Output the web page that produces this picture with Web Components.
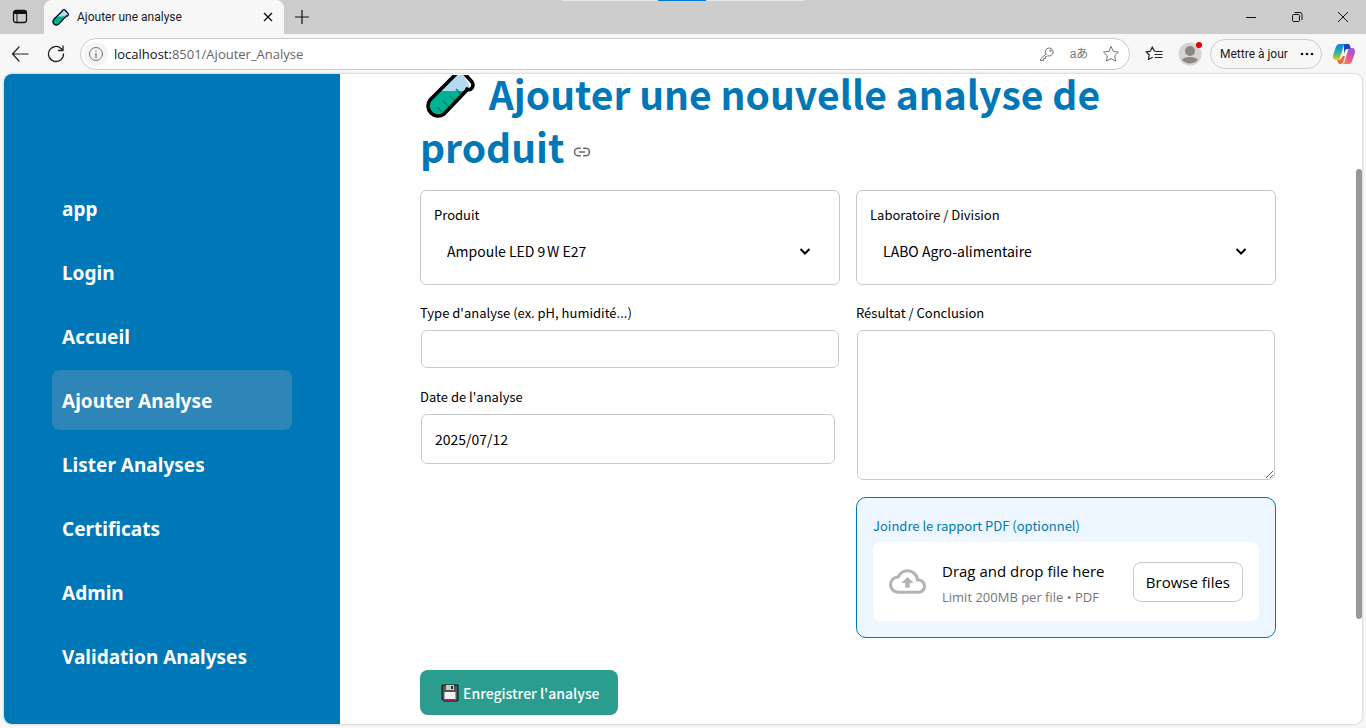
<!DOCTYPE html>
<html lang="fr">
<head>
<meta charset="utf-8">
<title>Ajouter une analyse</title>
<style>
  html, body { margin: 0; height: 100%; }
  body { --source: "Noto Sans CJK SC", sans-serif; --segoe: "Open Sans", "Noto Sans", sans-serif; --blue: #0077b6; --line: #c9cacc; font-family: var(--source); color: #000; background: #f7f7f7; }
</style>
</head>
<body>
<browser-window>
  <tab-strip slot="tabs" label="Ajouter une analyse"></tab-strip>
  <address-bar slot="toolbar"></address-bar>
  <side-nav slot="page">
    <nav-item href="#app">app</nav-item>
    <nav-item href="#login">Login</nav-item>
    <nav-item href="#accueil">Accueil</nav-item>
    <nav-item href="#ajouter" current>Ajouter Analyse</nav-item>
    <nav-item href="#lister">Lister Analyses</nav-item>
    <nav-item href="#certificats">Certificats</nav-item>
    <nav-item href="#admin">Admin</nav-item>
    <nav-item href="#validation">Validation Analyses</nav-item>
  </side-nav>
  <analysis-page slot="page"></analysis-page>
</browser-window>
<script>
const define = (name, html, setup) => {
  const t = document.createElement('template');
  t.innerHTML = '<style>:host,*{box-sizing:border-box}</style>' + html;
  customElements.define(name, class extends HTMLElement {
    constructor() {
      super();
      this.attachShadow({ mode: 'open' }).append(t.content.cloneNode(true));
    }
    connectedCallback() { if (setup) setup(this, this.shadowRoot); }
  });
};

define('browser-window', `
<style>
  :host { display: flex; flex-direction: column; min-height: 100vh; background: #f7f7f7; }
  .page { flex: 1; display: flex; margin: 0 4px 4px; border-radius: 8px; background: #fff; box-shadow: 0 0 2px 1px #d8d8d8; }
</style>
<slot name="tabs"></slot>
<slot name="toolbar"></slot>
<div class="page"><slot name="page"></slot></div>`);

define('test-tube', `
<style>
  :host { display: inline-block; overflow: hidden; }
  svg { display: block; width: 100%; height: 100%; }
  :host([cropped]) svg { height: 50px; margin-top: -6px; }
</style>
<svg viewBox="0 -6 50 50" aria-hidden="true">
  <path d="M31-1 5 25a10 10 0 0 0 14 14L46 13 36-4z" fill="#b3daf2"/>
  <path d="M14 16h28L19 39A10 10 0 0 1 5 25z" fill="#00b294"/>
  <path d="M31 14l5 5M24 20l5 5M18 26l5 5M12 32l5 5" stroke="#008575" stroke-width="1.500"/>
  <path d="M31-1 5 25a10 10 0 0 0 14 14L42 15M30-1c1-3 5-4 8-2l9 10c2 3 1 5-1 7-1 1-3 1-4 0" fill="none" stroke="#000" stroke-width="3.600" stroke-linecap="round" stroke-linejoin="round"/>
</svg>`);

define('tab-strip', `
<style>
  :host { display: flex; position: relative; height: 34px; flex: none; background: #cdcdcd; font: 12px/16px Roboto, sans-serif; color: #1b1b1b; }
  button { border: 0; padding: 0; background: none; display: grid; place-items: center; color: inherit; }
  svg { display: block; fill: none; stroke: #111; }
  .menu { width: 44px; padding-right: 4px; }
  .tab { width: 240px; display: flex; align-items: center; gap: 8px; padding: 0 8px; background: #f7f7f7; border-radius: 8px 8px 0 0; }
  test-tube { width: 17px; height: 17px; }
  .tab span { flex: 1; }
  .new { width: 36px; }
  .space { flex: 1; }
  .win { width: 46px; }
  .peek { position: absolute; top: 0; left: 0; right: 0; }
  .peek i { display: block; width: 242px; height: 1px; margin: 0 auto; background: linear-gradient(90deg, #e8e8e8 96px, #0078d4 96px 144px, #e8e8e8 144px); }
</style>
<button class="menu" aria-label="Onglets"><svg width="16" height="16"><rect x="1.5" y="1.5" width="13" height="12" rx="2.5" stroke-width="1.3"/><path d="M2 4h12M2 2.7h12" stroke-width="2"/><path d="M5 4v9"/></svg></button>
<div class="tab"><test-tube></test-tube><span></span>
<button aria-label="Fermer l'onglet"><svg width="16" height="16"><path d="M4 4l8 8M12 4l-8 8" stroke-width="1.4"/></svg></button></div>
<button class="new" aria-label="Nouvel onglet"><svg width="16" height="16"><path d="M8 1v14M1 8h14" stroke-width="1.2"/></svg></button>
<div class="space"></div>
<button class="win" aria-label="Réduire"><svg width="12" height="12"><path d="M1 6.5h10"/></svg></button>
<button class="win" aria-label="Restaurer"><svg width="12" height="12"><rect x="1.5" y="3.5" width="7" height="7" rx="1.2"/><path d="M3.5 1.5h5.5a2 2 0 0 1 2 2V9"/></svg></button>
<button class="win" aria-label="Fermer"><svg width="12" height="12"><path d="M1 1l10 10M11 1L1 11"/></svg></button>
<div class="peek"><i></i></div>`, (el, root) => {
  root.querySelector('.tab span').textContent = el.getAttribute('label');
});

define('address-bar', `
<style>
  :host { display: flex; align-items: center; height: 40px; flex: none; padding: 0 10px 0 8px; font: 13px/18px var(--segoe); color: #1b1b1b; }
  button { border: 0; padding: 0; background: none; display: grid; place-items: center; width: 24px; height: 24px; color: inherit; font: inherit; flex: none; }
  svg { display: block; fill: none; stroke: #222; stroke-linecap: round; stroke-linejoin: round; }
  .nav { display: flex; gap: 12px; width: 72px; }
  .url { flex: 1; display: flex; align-items: center; height: 32px; border: 1px solid #ccc; border-radius: 16px; background: #fff; padding: 0 6px 0 3px; gap: 8px; }
  .url svg { stroke: #757575; }
  .info { background: #f4f4f4; border-radius: 50%; }
  .address { flex: 1; margin-left: -2px; color: #666; }
  .address b { font-weight: 400; color: #111; }
  .tr { font: 12px/18px "Liberation Sans", "Noto Sans CJK JP", sans-serif; color: #777; }
  .fav { margin: 0 12px; }
  .avatar { position: relative; }
  .avatar svg { stroke: none; }
  .dot { position: absolute; top: 0; right: 0; width: 6px; height: 6px; border-radius: 50%; background: #e00000; }
  .update { display: flex; align-items: center; gap: 10px; width: 112px; justify-content: space-between; height: 30px; border: 1px solid #ccc; border-radius: 16px; padding: 0 6px 0 9px; margin: 0 10px 0 8px; font: 12px/18px Roboto, sans-serif; white-space: nowrap; }
  .update svg { stroke: none; fill: #111; }
  .copilot svg { stroke: none; }
</style>
<div class="nav">
<button aria-label="Retour"><svg width="18" height="18"><path d="M17 9H1.500M8 2L1.500 9L8 16" stroke-width="1.2"/></svg></button>
<button aria-label="Actualiser"><svg width="18" height="18"><path d="M16.500 9a7.500 7.500 0 1 1-2.500-5.600L16 5.500M16 1v4.500h-4.500" stroke-width="1.3"/></svg></button>
</div>
<div class="url">
<button class="info" aria-label="Informations sur le site"><svg width="16" height="16"><circle cx="8" cy="8" r="6.500"/><path d="M8 7.500v4M8 4.800v.3" stroke-width="1.300"/></svg></button>
<span class="address"><b>localhost:</b>8501/Ajouter_Analyse</span>
<button aria-label="Mot de passe"><svg width="16" height="16"><path d="M6.800 8.200 1.500 13v1.500h3v-2h2v-2h1.300l.8-.8a4 4 0 1 0-1.800-1.500z"/><circle cx="11.300" cy="4.800" r=".6"/></svg></button>
<button class="tr" aria-label="Traduire">aあ</button>
<button aria-label="Favori"><svg width="18" height="18"><path d="m9 1.500 2.300 4.900 5.200.7-3.800 3.700.9 5.300L9 13.600l-4.600 2.500.9-5.300L1.500 7.100l5.200-.7z"/></svg></button>
</div>
<button class="fav" aria-label="Favoris"><svg width="18" height="18"><path d="M10 5.800h-.8L7.300 2 5.200 6.300l-4.200.5 3.200 3-.8 4.700 3.900-2M11 6.500h6M10 9.500h7M10 12.500h7" stroke-width="1.200"/></svg></button>
<button class="avatar" aria-label="Profil"><svg width="24" height="24"><circle cx="12" cy="12" r="11.500" fill="#d6d3d0"/><circle cx="12" cy="9" r="5" fill="#8b8784"/><path d="M4 18c2-4 14-4 16 0a11 11 0 0 1-16 0" fill="#8b8784"/></svg><i class="dot"></i></button>
<button class="update">Mettre à jour <svg width="16" height="16"><circle cx="3" cy="8" r="1.300"/><circle cx="8" cy="8" r="1.300"/><circle cx="13" cy="8" r="1.300"/></svg></button>
<button class="copilot" aria-label="Copilot"><svg width="24" height="24" viewBox="0 0 24 24">
<defs><linearGradient id="a" x1="0" y1="0" x2="0" y2="1"><stop stop-color="#1686e8"/><stop offset=".4" stop-color="#18a5c0"/><stop offset=".7" stop-color="#6cc455"/><stop offset="1" stop-color="#f2c815"/></linearGradient><linearGradient id="b" x1=".8" y1="0" x2="0" y2="1"><stop stop-color="#9355e5"/><stop offset=".5" stop-color="#e5549c"/><stop offset="1" stop-color="#ff943d"/></linearGradient></defs>
<path d="M12 2h4c2 0 2 2 3 5h-3c-3 0-3 2-4 5z" fill="#1643b8"/>
<path d="M7.500 2H14c-2 0-2.500 2-3 4L8.500 14c-.7 3-2 4-4 4H4c-3 0-3.500-3-2.500-6l2-6c1-3 2-4 4-4z" fill="url(#a)"/>
<path d="M16.500 22H10c2 0 2.500-2 3-4l2.500-8c.7-3 2-4 4-4h.5c3 0 3.500 3 2.500 6l-2 6c-1 3-2 4-4 4z" fill="url(#b)"/>
<path d="M5 18c3 0 4.500-1 5.500-4h2.500l-1.500 5c-.6 2-1.500 3-3.500 3-2 0-2-2-3-4z" fill="#f06b30"/>
</svg></button>`);

define('side-nav', `
<style>
  :host { display: block; flex: none; width: 336px; background: var(--blue); padding: 104px 48px 0; border-radius: 8px 0 0 8px; }
  nav { display: flex; flex-direction: column; gap: 4px; }
</style>
<nav><slot></slot></nav>`);

define('nav-item', `
<style>
  :host { display: block; }
  a { display: flex; align-items: center; height: 60px; padding: 2px 10px 0; border-radius: 8px; color: #fff; text-decoration: none; font: 700 19px/28px "Noto Sans", sans-serif; }
  :host([current]) a { background: #2e86b8; }
</style>
<a><slot></slot></a>`, (el, root) => {
  root.querySelector('a').href = el.getAttribute('href');
});

define('select-card', `
<style>
  :host { display: block; border: 1px solid var(--line); border-radius: 6px; padding: 14px 13px; height: 95px; }
  label { display: block; font-size: 13px; line-height: 20px; }
  .box { position: relative; margin-top: 6px; }
  select { appearance: none; display: block; width: 100%; height: 40px; border: 0; background: none; padding: 0 40px 0 13px; font: 14px/20px var(--source); color: #000; }
  svg { position: absolute; right: 14px; top: 13px; fill: none; stroke: #000; stroke-width: 2; pointer-events: none; }
</style>
<label for="s"></label>
<div class="box"><select id="s"><option></option></select><svg width="14" height="14"><path d="M2.500 5 7 9.500 11.500 5"/></svg></div>`, (el, root) => {
  root.querySelector('label').textContent = el.getAttribute('label');
  root.querySelector('option').textContent = el.getAttribute('value');
});

define('text-field', `
<style>
  :host { display: block; }
  label { display: block; font-size: 13px; line-height: 20px; margin-bottom: 7px; }
  .control { padding: 0 1px; }
  input, textarea { display: block; width: 100%; border: 1px solid var(--line); border-radius: 6px; padding: 0 13px; background: #fff; color: #000; font: 14px/20px var(--source); }
  input { height: 38px; }
  :host([kind="date"]) .control { padding-right: 5px; }
  :host([kind="date"]) input { height: 50px; }
  textarea { height: 150px; }
</style>
<label for="f"></label><div class="control"></div>`, (el, root) => {
  root.querySelector('label').textContent = el.getAttribute('label');
  const f = document.createElement(el.getAttribute('kind') === 'area' ? 'textarea' : 'input');
  f.id = 'f';
  f.value = el.getAttribute('value') || '';
  root.querySelector('.control').replaceChildren(f);
});

define('file-drop', `
<style>
  :host { display: block; border: 1px solid var(--blue); border-radius: 10px; background: #eef7ff; padding: 18px 16px 16px; }
  .label { font-size: 13px; line-height: 20px; color: var(--blue); margin-bottom: 6px; }
  .drop { display: flex; align-items: center; gap: 16px; height: 79px; padding: 0 16px; border-radius: 8px; background: #fff; font-family: var(--segoe); }
  svg { flex: none; }
  .text { flex: 1; white-space: nowrap; padding-top: 3px; }
  .big { font-size: 15px; line-height: 26px; margin-bottom: 1px; }
  .small { font-size: 13px; line-height: 24px; color: #777; }
  button { height: 40px; padding: 0 12px; border: 1px solid var(--line); border-radius: 8px; background: #fff; color: #000; font: 15px/24px var(--segoe); white-space: nowrap; }
</style>
<div class="label" id="l">Joindre le rapport PDF (optionnel)</div>
<div class="drop" role="group" aria-labelledby="l">
<svg width="37" height="37" viewBox="0 0 24 24" fill="#b3b3b3"><path d="M19.350 10.040A7.490 7.490 0 0 0 12 4C9.110 4 6.600 5.640 5.350 8.040A5.994 5.994 0 0 0 0 14c0 3.310 2.690 6 6 6h13c2.760 0 5-2.240 5-5 0-2.640-2.050-4.780-4.650-4.960zM19 18H6c-2.210 0-4-1.790-4-4s1.790-4 4-4h.71C7.370 7.690 9.480 6 12 6c3.040 0 5.500 2.460 5.500 5.500v.5H19c1.660 0 3 1.340 3 3s-1.340 3-3 3zM8 13h2.550v3h2.900v-3H16l-4-4z"/></svg>
<div class="text"><div class="big">Drag and drop file here</div><div class="small">Limit 200MB per file • PDF</div></div>
<button type="button">Browse files</button>
</div>`);

define('analysis-page', `
<style>
  :host { display: flex; flex: 1; min-width: 0; }
  main { flex: 1; min-width: 0; padding: 0 80px; }
  h1 { margin: -7px 0 17px; font: 700 39px/53px var(--source); color: var(--blue); }
  h1 test-tube { width: 50px; height: 44px; vertical-align: -9px; margin: 0 5px; }
  h1 span { white-space: nowrap; }
  h1 a { display: inline-block; vertical-align: 2px; line-height: 0; }
  .grid { display: grid; grid-template-columns: 1fr 1fr; gap: 18px 16px; align-items: start; }
  .col { display: flex; flex-direction: column; gap: 19px; }
  .right { gap: 17px; }
  .save { display: flex; align-items: center; gap: 4px; height: 45px; margin-top: 32px; padding: 0 18px 0 21px; border: 0; border-radius: 8px; background: #2a9d8f; color: #fff; font: 500 14px/24px var(--source); white-space: nowrap; }
  .scroll { width: 6px; padding-top: 95px; }
  .scroll i { display: block; height: 450px; border-radius: 3px; background: #999; }
</style>
<main>
<h1><test-tube cropped></test-tube> Ajouter une nouvelle analyse de <span>produit <a href="#ajouter" aria-label="Lien vers ce titre"><svg width="18" height="18" viewBox="0 0 24 24" fill="none" stroke="#6a6a6a" stroke-width="2"><path d="M10.500 7H7a5 5 0 0 0 0 10h3.500M13.500 7H17a5 5 0 0 1 0 10h-3.500M8 12h8"/></svg></a></span></h1>
<form onsubmit="return false">
<div class="grid">
<select-card label="Produit" value="Ampoule LED 9&#8239;W E27"></select-card>
<select-card label="Laboratoire / Division" value="LABO Agro-alimentaire"></select-card>
<div class="col">
<text-field label="Type d'analyse (ex. pH, humidité...)"></text-field>
<text-field kind="date" label="Date de l'analyse" value="2025/07/12"></text-field>
</div>
<div class="col right">
<text-field kind="area" label="Résultat / Conclusion"></text-field>
<file-drop></file-drop>
</div>
</div>
<button class="save"><svg width="18" height="18" viewBox="0 0 18 18" aria-hidden="true"><path d="M1 1h16v16H3l-2-2z" fill="#555" stroke="#111"/><path d="M5 1h8v5H5z" fill="#c8c8c8"/><path d="M10 2h2v3h-2z" fill="#333"/><path d="M3.500 8h11v8h-11z" fill="#f2f2f2"/><path d="M3.500 15h11v1.500h-11z" fill="#e3008c"/></svg>Enregistrer l'analyse</button>
</form>
</main>
<div class="scroll"><i></i></div>`);
</script>
</body>
</html>
